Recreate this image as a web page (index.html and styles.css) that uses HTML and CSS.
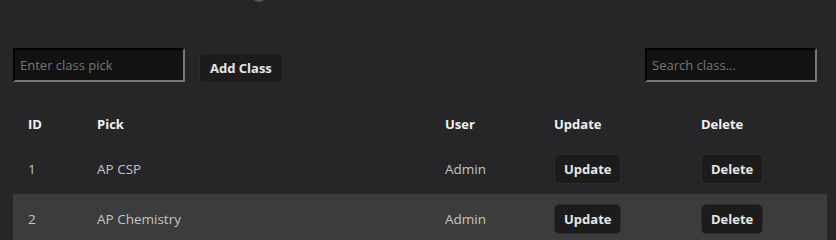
FILE: index.html
```html
<!DOCTYPE html>
<html lang="en">
<head>
    <meta charset="UTF-8">
    <meta name="viewport" content="width=device-width, initial-scale=1.0">
    <title>Class Picks</title>
    <link rel="stylesheet" href="styles.css">
</head>
<body>
    <div class="page">
        <div class="top-dot"></div>
        <div class="toolbar">
            <div class="add-group">
                <input type="text" class="text-input" placeholder="Enter class pick">
                <button class="btn add-btn">Add Class</button>
            </div>
            <input type="text" class="text-input search-input" placeholder="Search class...">
        </div>
        <table class="class-table">
            <thead>
                <tr>
                    <th class="col-id">ID</th>
                    <th class="col-pick">Pick</th>
                    <th class="col-user">User</th>
                    <th class="col-update">Update</th>
                    <th class="col-delete">Delete</th>
                </tr>
            </thead>
            <tbody>
                <tr>
                    <td>1</td>
                    <td>AP CSP</td>
                    <td>Admin</td>
                    <td><button class="btn row-btn">Update</button></td>
                    <td><button class="btn row-btn">Delete</button></td>
                </tr>
                <tr class="alt">
                    <td>2</td>
                    <td>AP Chemistry</td>
                    <td>Admin</td>
                    <td><button class="btn row-btn">Update</button></td>
                    <td><button class="btn row-btn">Delete</button></td>
                </tr>
            </tbody>
        </table>
    </div>
</body>
</html>
```

FILE: styles.css
```css
body {
    margin: 0;
    background-color: #262628;
    font-family: "Open Sans", "Noto Sans", sans-serif;
    color: #c4c4c4;
}
.page {
    position: relative;
    width: 814px;
    padding: 0 9px 0 13px;
}
.top-dot {
    position: absolute;
    left: 253px;
    top: -8px;
    width: 12px;
    height: 10px;
    border-radius: 50%;
    background: #555;
}
.toolbar {
    display: flex;
    justify-content: space-between;
    align-items: flex-start;
    padding-top: 48px;
    padding-right: 10px;
}
.add-group {
    display: flex;
    align-items: flex-start;
    gap: 14px;
}
.text-input {
    width: 172px;
    height: 34px;
    box-sizing: border-box;
    background: #121212;
    color: #ddd;
    border: 2px inset #767676;
    border-top-color: #1a1a1a;
    border-left-color: #1a1a1a;
    padding: 0 5px;
    font-family: inherit;
    font-size: 13px;
}
.text-input::placeholder {
    color: #777;
}
.btn {
    background: #1c1c1c;
    color: #e6e6e6;
    border: 1px solid #2c2c2c;
    border-radius: 5px;
    font-family: inherit;
    font-weight: bold;
    font-size: 13px;
    cursor: pointer;
}
.add-btn {
    margin-top: 5px;
    height: 30px;
    padding: 0 10px;
}
.class-table {
    width: 814px;
    border-collapse: collapse;
    margin-top: 20px;
    font-size: 13.5px;
}
.class-table th {
    text-align: left;
    color: #f0f0f0;
    font-weight: bold;
    font-size: 13px;
    height: 41px;
    padding: 0 15px;
}
.class-table td {
    height: 50px;
    padding: 0 15px;
}
.class-table tr.alt {
    background: #3c3c3c;
}
.col-id { width: 39px; }
.col-pick { width: 318px; }
.col-user { width: 79px; }
.col-update { width: 117px; }
.row-btn {
    height: 30px;
    padding: 0 9px;
}
```
